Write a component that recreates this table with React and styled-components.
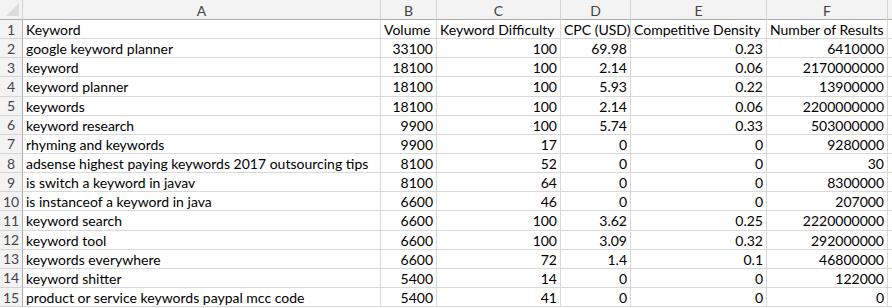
import styled, { createGlobalStyle } from "styled-components";

const GlobalStyle = createGlobalStyle`
    html, body {
        margin: 0;
        padding: 0;
        background: #ffffff;
    }
    body {
        font-family: Lato, "Liberation Sans", sans-serif;
    }
`;

const columns = ["A", "B", "C", "D", "E", "F", ""];

const rows = [
    ["Keyword", "Volume", "Keyword Difficulty", "CPC (USD)", "Competitive Density", "Number of Results"],
    ["google keyword planner", 33100, 100, 69.98, 0.23, 6410000],
    ["keyword", 18100, 100, 2.14, 0.06, 2170000000],
    ["keyword planner", 18100, 100, 5.93, 0.22, 13900000],
    ["keywords", 18100, 100, 2.14, 0.06, 2200000000],
    ["keyword research", 9900, 100, 5.74, 0.33, 503000000],
    ["rhyming and keywords", 9900, 17, 0, 0, 9280000],
    ["adsense highest paying keywords 2017 outsourcing tips", 8100, 52, 0, 0, 30],
    ["is switch a keyword in javav", 8100, 64, 0, 0, 8300000],
    ["is instanceof a keyword in java", 6600, 46, 0, 0, 207000],
    ["keyword search", 6600, 100, 3.62, 0.25, 2220000000],
    ["keyword tool", 6600, 100, 3.09, 0.32, 292000000],
    ["keywords everywhere", 6600, 72, 1.4, 0.1, 46800000],
    ["keyword shitter", 5400, 14, 0, 0, 122000],
    ["product or service keywords paypal mcc code", 5400, 41, 0, 0, 0],
];

export default function App() {
    return (
        <>
            <GlobalStyle />
            <Sheet>
                <Corner>
                    <CornerMark />
                </Corner>
                {columns.map((c, i) => (
                    <ColHead key={"h" + i}>{c}</ColHead>
                ))}
                {rows.map((r, ri) => (
                    <Row key={ri}>
                        <RowHead>{ri + 1}</RowHead>
                        {r.map((v, ci) => (
                            <Cell key={ci} $numeric={typeof v === "number"}>
                                {v}
                            </Cell>
                        ))}
                        <Cell />
                    </Row>
                ))}
            </Sheet>
        </>
    );
}

const Sheet = styled.div`
    display: grid;
    grid-template-columns: 23px 358px 56px 124px 70px 136px 121px 80px;
    grid-template-rows: 20px repeat(15, 19.15px);
    width: 892px;
    height: 308px;
    overflow: hidden;
    font-size: 14px;
    color: #000000;
`;

const Row = styled.div`
    display: contents;
`;

const Corner = styled.div`
    position: relative;
    background: #f3f3f3;
    border-right: 1px solid #d5d5d5;
    border-bottom: 1px solid #ababab;
`;

const CornerMark = styled.div`
    position: absolute;
    right: 3px;
    bottom: 3px;
    width: 0;
    height: 0;
    border-left: 13px solid transparent;
    border-bottom: 13px solid #dcdcdc;
`;

const ColHead = styled.div`
    background: #f3f3f3;
    border-right: 1px solid #d5d5d5;
    border-bottom: 1px solid #ababab;
    color: #444444;
    font-size: 14px;
    display: flex;
    align-items: center;
    justify-content: center;
    padding-top: 1px;
    box-sizing: border-box;
`;

const RowHead = styled.div`
    background: #f3f3f3;
    border-right: 1px solid #ababab;
    border-bottom: 1px solid #d5d5d5;
    color: #444444;
    font-size: 14px;
    display: flex;
    align-items: center;
    justify-content: center;
    box-sizing: border-box;
`;

const Cell = styled.div`
    border-right: 1px solid #d9d9d9;
    border-bottom: 1px solid #d9d9d9;
    box-sizing: border-box;
    display: flex;
    align-items: center;
    justify-content: ${(p) => (p.$numeric ? "flex-end" : "flex-start")};
    padding: 1px 3px 0 3px;
    white-space: nowrap;
    overflow: visible;
`;
